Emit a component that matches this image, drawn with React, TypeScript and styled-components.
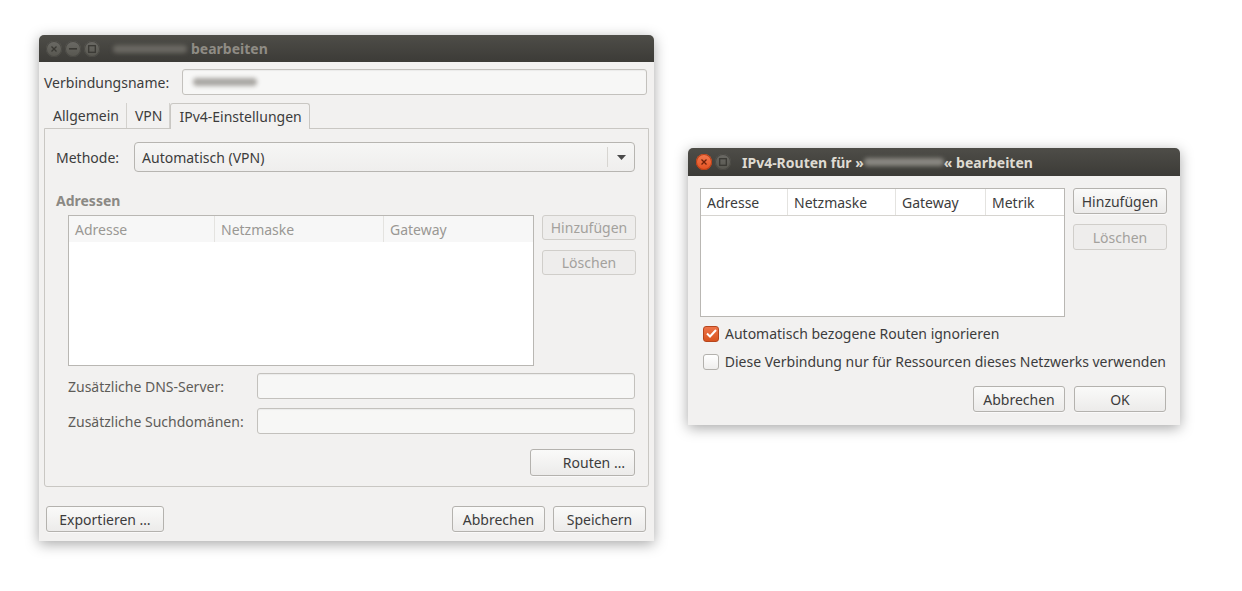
import React from 'react';
import styled, {createGlobalStyle, css} from 'styled-components';

const GlobalStyle = createGlobalStyle`
  html, body {
    margin: 0;
    padding: 0;
    background: #ffffff;
  }
  body {
    font-family: "Noto Sans", "Open Sans", sans-serif;
    font-size: 14px;
    color: #3c3c3c;
  }
`

const Desktop = styled.div`
  position: relative;
  width: 1242px;
  height: 591px;
  overflow: hidden;
  background: #ffffff;
`

const Window = styled.div<{ $left: number, $top: number, $width: number, $height: number }>`
  position: absolute;
  left: ${p => p.$left}px;
  top: ${p => p.$top}px;
  width: ${p => p.$width}px;
  height: ${p => p.$height}px;
  background: #f2f1f0;
  border-radius: 5px 5px 0 0;
  box-shadow: 0 3px 14px rgba(0, 0, 0, 0.35);
  display: flex;
  flex-direction: column;
  overflow: hidden;
`

const TitleBar = styled.div<{ $height: number, $pad: number }>`
  height: ${p => p.$height}px;
  flex: none;
  display: flex;
  align-items: center;
  padding-left: ${p => p.$pad}px;
  gap: 3px;
  background: linear-gradient(#4e4d48, #3c3b37);
`

const TitleButton = styled.div<{ $active?: boolean }>`
  width: 16px;
  height: 16px;
  border-radius: 50%;
  display: flex;
  align-items: center;
  justify-content: center;
  background: ${p => p.$active ? 'linear-gradient(#f37b51, #e3501f)' : 'linear-gradient(#6b6a65, #57564f)'};
  box-shadow: inset 0 0 0 1px ${p => p.$active ? '#b83f17' : '#4a4944'};

  svg {
    display: block;
  }
`

const Title = styled.div<{ $active?: boolean, $gap: number }>`
  margin-left: ${p => p.$gap}px;
  font-weight: 700;
  font-size: 14px;
  color: ${p => p.$active ? '#dfdbd2' : '#8f8c85'};
  display: flex;
  align-items: center;
  white-space: nowrap;
`

const Blur = styled.span<{ $width: number, $color: string, $space?: number }>`
  display: inline-block;
  width: ${p => p.$width}px;
  height: 8px;
  margin-right: ${p => p.$space || 0}px;
  border-radius: 4px;
  background: ${p => p.$color};
  filter: blur(2px);
`

const Body = styled.div`
  flex: 1;
  display: flex;
  flex-direction: column;
`

const NameRow = styled.div`
  display: flex;
  align-items: center;
  margin: 7px 7px 0 5px;
`

const Label = styled.div<{ $width?: number, $muted?: boolean }>`
  width: ${p => p.$width ? `${p.$width}px` : 'auto'};
  flex: none;
  color: ${p => p.$muted ? '#5e5c58' : '#3c3c3c'};
  white-space: nowrap;
`

const Entry = styled.div<{ $height?: number }>`
  flex: 1;
  height: ${p => p.$height || 26}px;
  box-sizing: border-box;
  border: 1px solid #c3c1bd;
  border-radius: 3px;
  background: #f7f7f6;
  box-shadow: inset 0 1px 1px rgba(0, 0, 0, 0.05);
  display: flex;
  align-items: center;
  padding-left: 10px;
`

const Tabs = styled.div`
  display: flex;
  margin: 8px 5px 0 6px;
  height: 25px;
`

const Tab = styled.div<{ $active?: boolean }>`
  padding: 0 7px 0 8px;
  display: flex;
  align-items: center;
  box-sizing: border-box;
  color: #3c3c3c;
  position: relative;
  ${p => p.$active ? css`
    border: 1px solid #c9c7c3;
    border-bottom: none;
    border-radius: 3px 3px 0 0;
    background: #f2f1f0;
    margin-bottom: -1px;
    height: 26px;
    z-index: 1;
  ` : css`
    border-right: 1px solid #d3d1cd;
  `}
`

const Notebook = styled.div`
  margin: 0 5px 0 5px;
  height: 359px;
  box-sizing: border-box;
  border: 1px solid #c9c7c3;
  border-radius: 0 0 3px 3px;
  padding: 13px 13px 0 11px;
  display: flex;
  flex-direction: column;
`

const MethodRow = styled.div`
  display: flex;
  align-items: center;
  gap: 15px;
`

const Combo = styled.div`
  flex: 1;
  height: 30px;
  box-sizing: border-box;
  border: 1px solid #b7b5b1;
  border-radius: 4px;
  background: linear-gradient(#f6f6f5, #efeeed);
  display: flex;
  align-items: center;
  padding-left: 7px;
`

const ComboText = styled.div`
  flex: 1;
`

const ComboArrow = styled.div`
  width: 26px;
  height: 20px;
  border-left: 1px solid #d7d5d1;
  display: flex;
  align-items: center;
  justify-content: center;
`

const SectionHead = styled.div`
  margin-top: 19px;
  font-weight: 700;
  color: #8b8984;
`

const Indented = styled.div`
  margin-left: 12px;
  display: flex;
  flex-direction: column;
`

const TableRow = styled.div<{ $top: number }>`
  display: flex;
  gap: 8px;
  margin-top: ${p => p.$top}px;
`

const Table = styled.div<{ $width: number, $height: number }>`
  width: ${p => p.$width}px;
  height: ${p => p.$height}px;
  box-sizing: border-box;
  border: 1px solid #b9b7b3;
  background: #ffffff;
  flex: none;
`

const TableHead = styled.div<{ $muted?: boolean, $lined?: boolean }>`
  display: flex;
  height: ${p => p.$lined ? 27 : 26}px;
  box-sizing: border-box;
  background: ${p => p.$muted ? '#f7f7f7' : '#ffffff'};
  border-bottom: ${p => p.$lined ? '1px solid #d6d4d0' : 'none'};
  color: ${p => p.$muted ? '#9a9894' : '#3c3c3c'};
`

const HeadCell = styled.div<{ $width?: number }>`
  width: ${p => p.$width ? `${p.$width}px` : 'auto'};
  flex: ${p => p.$width ? 'none' : 1};
  box-sizing: border-box;
  padding-left: 6px;
  display: flex;
  align-items: center;
  border-right: 1px solid #e4e3e0;

  &:last-child {
    border-right: none;
  }
`

const SideButtons = styled.div`
  display: flex;
  flex-direction: column;
  gap: 10px;
  width: 94px;
  flex: none;
`

const Button = styled.div<{ $width?: number, $disabled?: boolean, $height?: number, $end?: boolean }>`
  width: ${p => p.$width ? `${p.$width}px` : 'auto'};
  height: ${p => p.$height || 26}px;
  box-sizing: border-box;
  border: 1px solid ${p => p.$disabled ? '#d0ceca' : '#b4b2ae'};
  border-radius: 3px;
  background: ${p => p.$disabled ? '#eeedec' : 'linear-gradient(#fafaf9, #ecebea)'};
  color: ${p => p.$disabled ? '#a3a19d' : '#3c3c3c'};
  display: flex;
  align-items: center;
  justify-content: ${p => p.$end ? 'flex-end' : 'center'};
  padding: 0 9px;
  white-space: nowrap;
  box-shadow: ${p => p.$disabled ? 'none' : '0 1px 0 rgba(255,255,255,0.6)'};
`

const FieldRow = styled.div<{ $top: number }>`
  display: flex;
  align-items: center;
  margin-top: ${p => p.$top}px;
`

const RightAlign = styled.div<{ $top: number }>`
  display: flex;
  justify-content: flex-end;
  margin-top: ${p => p.$top}px;
`

const Footer = styled.div`
  display: flex;
  align-items: center;
  margin: 19px 8px 0 7px;
  gap: 8px;
`

const Spacer = styled.div`
  flex: 1;
`

const RouteBody = styled.div`
  padding: 12px 14px 0 12px;
  display: flex;
  flex-direction: column;
`

const CheckRow = styled.div<{ $top: number }>`
  display: flex;
  align-items: center;
  gap: 6px;
  margin-top: ${p => p.$top}px;
  margin-left: 3px;
  white-space: nowrap;
`

const Check = styled.div<{ $checked?: boolean }>`
  width: 16px;
  height: 16px;
  box-sizing: border-box;
  border-radius: 3px;
  border: 1px solid ${p => p.$checked ? '#b6461d' : '#b3b1ad'};
  background: ${p => p.$checked ? 'linear-gradient(#ee7449, #d9541f)' : 'linear-gradient(#ffffff, #efeeed)'};
  display: flex;
  align-items: center;
  justify-content: center;
`

const DialogButtons = styled.div`
  display: flex;
  justify-content: flex-end;
  gap: 9px;
  margin-top: 15px;
`

const CloseIcon = ({color}: { color: string }) => (
  <svg width="6" height="6" viewBox="0 0 6 6">
    <path d="M0.5 0.5 L5.5 5.5 M5.5 0.5 L0.5 5.5" stroke={color} strokeWidth="1.3"/>
  </svg>
)

const MinIcon = () => (
  <svg width="8" height="2" viewBox="0 0 8 2">
    <rect x="0" y="0" width="8" height="1.6" fill="#3a3934"/>
  </svg>
)

const MaxIcon = () => (
  <svg width="8" height="8" viewBox="0 0 8 8">
    <rect x="0.7" y="0.7" width="6.6" height="6.6" fill="none" stroke="#3a3934" strokeWidth="1.3"/>
  </svg>
)

function EditWindow() {
  return (
    <Window $left={39} $top={35} $width={615} $height={506}>
      <TitleBar $height={27} $pad={7}>
        <TitleButton><CloseIcon color="#3a3934"/></TitleButton>
        <TitleButton><MinIcon/></TitleButton>
        <TitleButton><MaxIcon/></TitleButton>
        <Title $gap={10}>
          <Blur $width={74} $color="#6a6862" $space={4}/>
          bearbeiten
        </Title>
      </TitleBar>
      <Body>
        <NameRow>
          <Label $width={138}>Verbindungsname:</Label>
          <Entry><Blur $width={64} $color="#a9a7a3"/></Entry>
        </NameRow>
        <Tabs>
          <Tab>Allgemein</Tab>
          <Tab>VPN</Tab>
          <Tab $active>IPv4-Einstellungen</Tab>
        </Tabs>
        <Notebook>
          <MethodRow>
            <Label>Methode:</Label>
            <Combo>
              <ComboText>Automatisch (VPN)</ComboText>
              <ComboArrow>
                <svg width="9" height="5" viewBox="0 0 9 5">
                  <path d="M0 0 L9 0 L4.5 5 Z" fill="#4a4a4a"/>
                </svg>
              </ComboArrow>
            </Combo>
          </MethodRow>
          <SectionHead>Adressen</SectionHead>
          <Indented>
            <TableRow $top={5}>
              <Table $width={466} $height={151}>
                <TableHead $muted>
                  <HeadCell $width={146}>Adresse</HeadCell>
                  <HeadCell $width={169}>Netzmaske</HeadCell>
                  <HeadCell>Gateway</HeadCell>
                </TableHead>
              </Table>
              <SideButtons>
                <Button $disabled $height={25}>Hinzufügen</Button>
                <Button $disabled $height={25}>Löschen</Button>
              </SideButtons>
            </TableRow>
            <FieldRow $top={7}>
              <Label $width={189} $muted>Zusätzliche DNS-Server:</Label>
              <Entry $height={26}/>
            </FieldRow>
            <FieldRow $top={9}>
              <Label $width={189} $muted>Zusätzliche Suchdomänen:</Label>
              <Entry $height={26}/>
            </FieldRow>
            <RightAlign $top={15}>
              <Button $width={105} $height={27} $end>Routen …</Button>
            </RightAlign>
          </Indented>
        </Notebook>
        <Footer>
          <Button $width={118}>Exportieren …</Button>
          <Spacer/>
          <Button $width={93}>Abbrechen</Button>
          <Button $width={93}>Speichern</Button>
        </Footer>
      </Body>
    </Window>
  )
}

function RoutesWindow() {
  return (
    <Window $left={688} $top={148} $width={492} $height={277}>
      <TitleBar $height={28} $pad={8}>
        <TitleButton $active><CloseIcon color="#6e2109"/></TitleButton>
        <TitleButton><MaxIcon/></TitleButton>
        <Title $active $gap={8}>
          IPv4-Routen für »<Blur $width={80} $color="#8a8882"/>« bearbeiten
        </Title>
      </TitleBar>
      <RouteBody>
        <TableRow $top={0}>
          <Table $width={365} $height={129}>
            <TableHead $lined>
              <HeadCell $width={87}>Adresse</HeadCell>
              <HeadCell $width={108}>Netzmaske</HeadCell>
              <HeadCell $width={90}>Gateway</HeadCell>
              <HeadCell>Metrik</HeadCell>
            </TableHead>
          </Table>
          <SideButtons>
            <Button $height={26}>Hinzufügen</Button>
            <Button $height={26} $disabled>Löschen</Button>
          </SideButtons>
        </TableRow>
        <CheckRow $top={7}>
          <Check $checked>
            <svg width="11" height="9" viewBox="0 0 11 9">
              <path d="M1 4.5 L4 7.5 L10 1" fill="none" stroke="#ffffff" strokeWidth="2"/>
            </svg>
          </Check>
          <span>Automatisch bezogene Routen ignorieren</span>
        </CheckRow>
        <CheckRow $top={9}>
          <Check/>
          <span>Diese Verbindung nur für Ressourcen dieses Netzwerks verwenden</span>
        </CheckRow>
        <DialogButtons>
          <Button $width={92} $height={26}>Abbrechen</Button>
          <Button $width={92} $height={26}>OK</Button>
        </DialogButtons>
      </RouteBody>
    </Window>
  )
}

export default function App() {
  return (
    <>
      <GlobalStyle/>
      <Desktop>
        <EditWindow/>
        <RoutesWindow/>
      </Desktop>
    </>
  )
}
